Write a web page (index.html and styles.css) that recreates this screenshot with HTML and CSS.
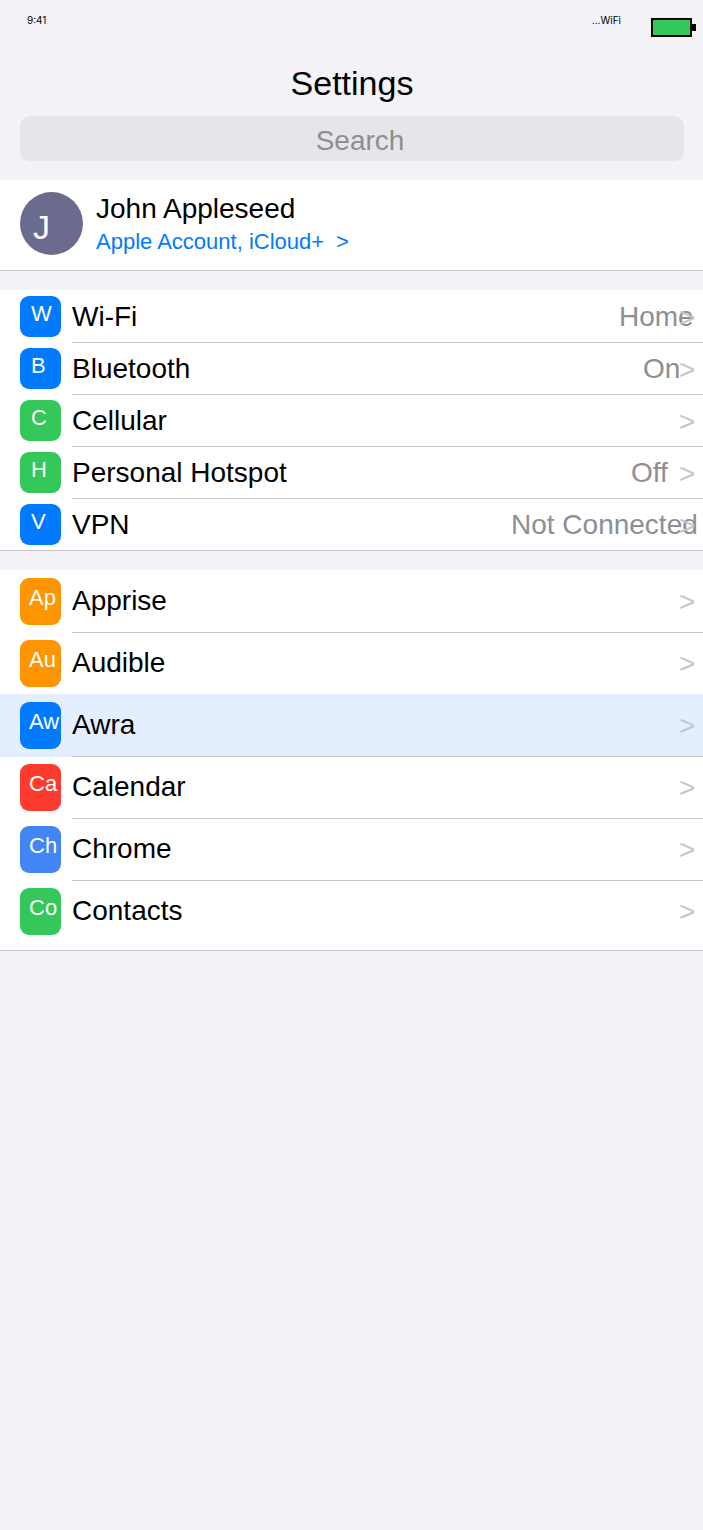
FILE: index.html
```html
<!DOCTYPE html>
<html lang="en">
<head>
    <meta charset="UTF-8">
    <meta name="viewport" content="width=device-width, initial-scale=1">
    <title>Settings</title>
    <link rel="stylesheet" href="styles.css">
</head>
<body>
    <div class="status">
        <span class="time">9:41</span>
        <span class="network">...WiFi</span>
        <span class="battery"></span>
    </div>
    <header>
        <h1>Settings</h1>
        <input class="search" type="text" placeholder="Search" aria-label="Search">
    </header>

    <a class="profile" href="#account">
        <span class="avatar">J</span>
        <span class="who">
            <span class="name">John Appleseed</span>
            <span class="account">Apple Account, iCloud+<span class="more">&gt;</span></span>
        </span>
    </a>

    <!-- connections -->
    <nav class="group network-list">
        <a class="row" href="#wifi">
            <span class="icon blue">W</span>
            <span class="text"><span class="label">Wi-Fi</span><span class="value" style="--chars: 4">Home</span><span class="arrow">&gt;</span></span>
        </a>
        <a class="row" href="#bluetooth">
            <span class="icon blue">B</span>
            <span class="text"><span class="label">Bluetooth</span><span class="value" style="--chars: 2">On</span><span class="arrow">&gt;</span></span>
        </a>
        <a class="row" href="#cellular">
            <span class="icon green">C</span>
            <span class="text"><span class="label">Cellular</span><span class="arrow">&gt;</span></span>
        </a>
        <a class="row" href="#hotspot">
            <span class="icon green">H</span>
            <span class="text"><span class="label">Personal Hotspot</span><span class="value" style="--chars: 3">Off</span><span class="arrow">&gt;</span></span>
        </a>
        <a class="row" href="#vpn">
            <span class="icon blue">V</span>
            <span class="text"><span class="label">VPN</span><span class="value" style="--chars: 13">Not Connected</span><span class="arrow">&gt;</span></span>
        </a>
    </nav>

    <!-- apps -->
    <nav class="group app-list">
        <a class="row" href="#apprise">
            <span class="icon orange">Ap</span>
            <span class="text"><span class="label">Apprise</span><span class="arrow">&gt;</span></span>
        </a>
        <a class="row" href="#audible">
            <span class="icon orange">Au</span>
            <span class="text"><span class="label">Audible</span><span class="arrow">&gt;</span></span>
        </a>
        <a class="row current" href="#awra">
            <span class="icon blue">Aw</span>
            <span class="text"><span class="label">Awra</span><span class="arrow">&gt;</span></span>
        </a>
        <a class="row" href="#calendar">
            <span class="icon red">Ca</span>
            <span class="text"><span class="label">Calendar</span><span class="arrow">&gt;</span></span>
        </a>
        <a class="row" href="#chrome">
            <span class="icon chrome">Ch</span>
            <span class="text"><span class="label">Chrome</span><span class="arrow">&gt;</span></span>
        </a>
        <a class="row" href="#contacts">
            <span class="icon green">Co</span>
            <span class="text"><span class="label">Contacts</span><span class="arrow">&gt;</span></span>
        </a>
    </nav>
</body>
</html>
```
FILE: styles.css
```css
*{
    box-sizing: border-box;
}
body{
    margin: 0;
    background: #f2f2f7;
    color: #000;
    font-family: "Liberation Sans", Arial, sans-serif;
    font-size: 28px;
}
a{
    color: inherit;
    text-decoration: none;
}

.status{
    display: flex;
    align-items: flex-start;
    height: 63px;
    padding: 14px 11px 0 27px;
    font-family: Inter, sans-serif;
    font-size: 10px;
    line-height: 12px;
}
.network{
    margin-left: auto;
    margin-right: 30px;
}
.battery{
    position: relative;
    width: 41px;
    height: 19px;
    margin-top: 4px;
    background: #34c759;
    border: 2px solid #000;
}
.battery::after{
    content: "";
    position: absolute;
    top: 4px;
    right: -6px;
    width: 4px;
    height: 7px;
    background: #000;
}

header{
    padding: 0 19px 0 20px;
}
h1{
    margin: 0 0 13px;
    font-size: 34px;
    font-weight: normal;
    line-height: 40px;
    text-align: center;
}
.search{
    display: block;
    width: 100%;
    height: 45px;
    padding: 4px 0 0 16px;
    border: 0;
    border-radius: 10px;
    background: #e5e5ea;
    font: inherit;
    text-align: center;
}
.search::placeholder{
    color: #8e8e93;
    opacity: 1;
}

.profile{
    display: flex;
    gap: 13px;
    margin-top: 19px;
    padding: 12px 20px;
    background: #fff;
    border-bottom: 1px solid #c6c6c8;
}
.avatar{
    width: 63px;
    height: 63px;
    padding-left: 13px;
    border-radius: 50%;
    background: #6b6b8d;
    color: #fff;
    font-size: 34px;
    line-height: 70px;
}
.who{
    display: flex;
    flex-direction: column;
}
.name{
    line-height: 34px;
}
.account{
    color: #007aff;
    font-size: 22px;
    line-height: 32px;
}
.more{
    margin-left: 12px;
}

.group{
    display: flex;
    flex-direction: column;
    margin-top: 19px;
    background: #fff;
    border-bottom: 1px solid #c6c6c8;
}
.row{
    display: flex;
    align-items: center;
    gap: 11px;
    height: 52px;
    padding-left: 20px;
}
.icon{
    width: 41px;
    height: 41px;
    padding-left: 11px;
    border-radius: 9px;
    color: #fff;
    font-size: 22px;
    line-height: 35px;
}
.text{
    display: flex;
    flex: 1;
    align-items: center;
    height: 100%;
    white-space: nowrap;
}
.network-list .text{
    padding-top: 2px;
}
/* divider sits under the row, a highlighted row covers it */
.row:not(:last-child) .text{
    box-shadow: 0 1px 0 #c6c6c8;
}
.label{
    flex: 1;
}
.value{
    width: calc(var(--chars) * 12px);
    margin-right: 12px;
    color: #8e8e93;
}
.arrow{
    width: 24px;
    padding-top: 2px;
    color: #c6c6c8;
}

.app-list{
    padding-bottom: 8px;
}
.app-list .row{
    height: 62px;
}
.app-list .icon{
    height: 47px;
    padding-left: 9px;
    line-height: 39px;
}
.current{
    background: #e3efff;
    box-shadow: 0 1px 0 #e3efff;
}

.blue{
    background: #007aff;
}
.green{
    background: #34c759;
}
.orange{
    background: #ff9500;
}
.red{
    background: #ff3b30;
}
.chrome{
    background: #4285f4;
}
```
